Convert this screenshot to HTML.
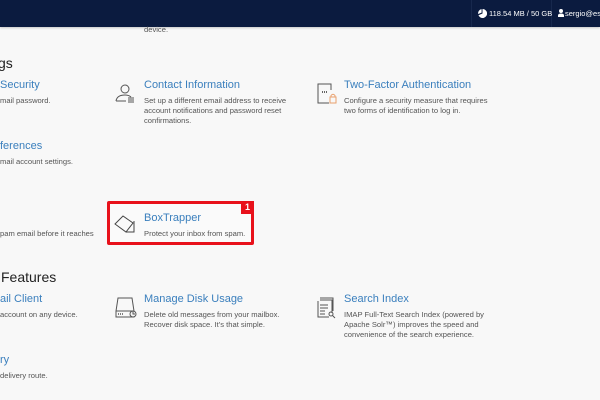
<!DOCTYPE html>
<html><head><meta charset="utf-8"><style>
*{margin:0;padding:0;box-sizing:border-box}
body{width:600px;height:400px;overflow:hidden;background:#f8f8f8;font-family:"Liberation Sans",sans-serif;position:relative}
.hdr{position:absolute;left:0;top:0;width:600px;height:27px;background:#0b1b3f;box-shadow:0 1px 2px rgba(0,0,0,.2)}
.sep{position:absolute;top:0;width:1px;height:27px;background:#17284d}
.ht{position:absolute;top:9px;color:#fff;font-size:7.5px;white-space:nowrap}
.a{position:absolute;white-space:nowrap}
.h{font-size:14px;color:#222}
.t{font-size:11px;color:#3a7fbd}
.d{font-size:7.6px;color:#555;line-height:10px}
svg{position:absolute}
</style></head><body>
<div class="hdr">
<div class="sep" style="left:471px"></div><div class="sep" style="left:551px"></div>
<svg style="left:478px;top:9px" width="9" height="9" viewBox="0 0 10 10"><path d="M5 5V0A5 5 0 1 1 0.5 7Z" fill="#fff"/><path d="M4 4V0.2A4.5 4.5 0 0 0 0.2 5.5Z" fill="#fff"/></svg>
<div class="ht" style="left:489px">118.54 MB / 50 GB</div>
<svg style="left:558px;top:9px" width="6" height="8" viewBox="0 0 6 8"><circle cx="3" cy="2" r="2" fill="#fff"/><path d="M0 8V6.5Q0 4.5 3 4.5Q6 4.5 6 6.5V8Z" fill="#fff"/></svg>
<div class="ht" style="left:565px">sergio@estu</div>
</div>

<div class="a d" style="left:144px;top:25px">device.</div>
<div class="a h" style="left:-2px;top:55px">gs</div>

<div class="a t" style="left:0;top:79px">Security</div>
<div class="a d" style="left:0;top:96px">mail password.</div>

<svg style="left:114px;top:83px" width="22" height="22" viewBox="0 0 22 22" fill="none" stroke="#555" stroke-width="1"><circle cx="11" cy="6" r="4"/><path d="M2 18Q3 12 11 12Q15 12 17 14M2 18H12M14 15H20M14 17H20M14 19H20"/></svg>
<div class="a t" style="left:144px;top:79px">Contact Information</div>
<div class="a d" style="left:144px;top:96px">Set up a different email address to receive<br>account notifications and password reset<br>confirmations.</div>

<svg style="left:317px;top:83px" width="20" height="22" viewBox="0 0 20 22" fill="none" stroke-width="1"><path d="M14 7V1H1V20H12" stroke="#555"/><path d="M5 9h1M7 9h1M9 9h1" stroke="#333" stroke-width="1.5"/><rect x="13" y="14" width="6" height="6" stroke="#e9a06d"/><path d="M14 14V12.5Q16 10 18 12.5V14" stroke="#e9a06d"/></svg>
<div class="a t" style="left:344px;top:79px">Two-Factor Authentication</div>
<div class="a d" style="left:344px;top:96px">Configure a security measure that requires<br>two forms of identification to log in.</div>

<div class="a t" style="left:0;top:140px">ferences</div>
<div class="a d" style="left:0;top:157px">mail account settings.</div>

<div class="a d" style="left:0;top:229px">pam email before it reaches</div>

<div class="a" style="left:107px;top:201px;width:147px;height:44px;border:3px solid #e8111b;border-radius:2px;background:#fafafa"></div>
<div class="a" style="left:241px;top:201px;width:13px;height:13px;background:#e8111b;color:#fff;font-size:9px;font-weight:bold;text-align:center;line-height:12px">1</div>
<svg style="left:113px;top:213px" width="23" height="20" viewBox="0 0 23 20" fill="none" stroke="#444" stroke-width="1"><path d="M2 11L10 3L20 10L13 19L2 11Z"/><path d="M13 19H21V8"/></svg>
<div class="a t" style="left:144px;top:212px">BoxTrapper</div>
<div class="a d" style="left:144px;top:229px">Protect your inbox from spam.</div>

<div class="a h" style="left:1px;top:269px">Features</div>

<div class="a t" style="left:0;top:293px">ail Client</div>
<div class="a d" style="left:0;top:310px">account on any device.</div>

<svg style="left:115px;top:297px" width="22" height="22" viewBox="0 0 22 22" fill="none" stroke="#555" stroke-width="1"><path d="M3 1H17L19 14V20H1V14L3 1Z"/><path d="M1 14H19"/><path d="M3 17h1M5 17h1M7 17h1" stroke-width="1.5"/><circle cx="18" cy="17" r="3" fill="#f8f8f8"/><path d="M18 14.5V17H20"/></svg>
<div class="a t" style="left:144px;top:293px">Manage Disk Usage</div>
<div class="a d" style="left:144px;top:310px">Delete old messages from your mailbox.<br>Recover disk space. It’s that simple.</div>

<svg style="left:316px;top:297px" width="20" height="22" viewBox="0 0 20 22" fill="none" stroke="#555" stroke-width="1"><path d="M4 3H16V16M2 4V20H13"/><path d="M4 1H17V14"/><path d="M4 8H12M4 11H12M4 14H9M4 17H9"/><circle cx="15" cy="17" r="2"/><path d="M16.5 18.5L19 21"/></svg>
<div class="a t" style="left:344px;top:293px">Search Index</div>
<div class="a d" style="left:344px;top:310px">IMAP Full-Text Search Index (powered by<br>Apache Solr™) improves the speed and<br>convenience of the search experience.</div>

<div class="a t" style="left:0;top:354px">ry</div>
<div class="a d" style="left:0;top:371px">delivery route.</div>
</body></html>
